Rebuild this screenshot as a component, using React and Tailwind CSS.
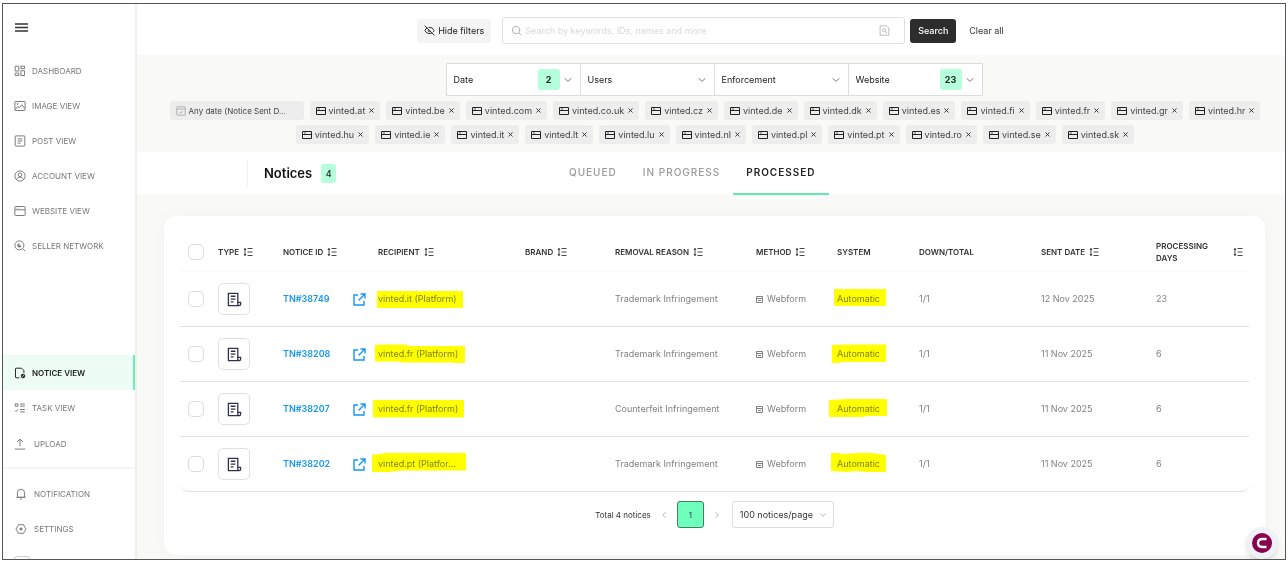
import React, { useState } from 'react';
import { ChevronDown, ChevronLeft, ChevronRight, EyeOff, Search, X } from 'lucide-react';

const MAIN_NAV = [
  { label: 'DASHBOARD', icon: 'dashboard' },
  { label: 'IMAGE VIEW', icon: 'image' },
  { label: 'POST VIEW', icon: 'post' },
  { label: 'ACCOUNT VIEW', icon: 'account' },
  { label: 'WEBSITE VIEW', icon: 'website' },
  { label: 'SELLER NETWORK', icon: 'seller' },
];

const FILTERS = [
  { label: 'Date', count: 2 },
  { label: 'Users' },
  { label: 'Enforcement' },
  { label: 'Website', count: 23 },
];

const SITES = [
  'at', 'be', 'com', 'co.uk', 'cz', 'de', 'dk', 'es', 'fi', 'fr', 'gr', 'hr',
  'hu', 'ie', 'it', 'lt', 'lu', 'nl', 'pl', 'pt', 'ro', 'se', 'sk',
];

const TABS = ['QUEUED', 'IN PROGRESS', 'PROCESSED'];

const COLUMNS = [
  { label: 'TYPE', sort: true },
  { label: 'NOTICE ID', sort: true },
  { label: 'RECIPIENT', sort: true },
  { label: 'BRAND', sort: true },
  { label: 'REMOVAL REASON', sort: true },
  { label: 'METHOD', sort: true },
  { label: 'SYSTEM' },
  { label: 'DOWN/TOTAL' },
  { label: 'SENT DATE', sort: true },
];

// recipientMark and systemMark are the marker strokes over the two cells
const NOTICES = [
  { id: 'TN#38749', recipient: 'vinted.it (Platform)', reason: 'Trademark Infringement', date: '12 Nov 2025', days: 23, recipientMark: 'M7 4H93V21H7Z', systemMark: 'M5 2H57V19H5Z' },
  { id: 'TN#38208', recipient: 'vinted.fr (Platform)', reason: 'Trademark Infringement', date: '11 Nov 2025', days: 6, recipientMark: 'M5 3L14 2.5H34L40 4H95V21H84L82 20.5H32L28 19.5H5Z', systemMark: 'M3 3L18 2.5H57V20H13L10 21H3Z' },
  { id: 'TN#38207', recipient: 'vinted.fr (Platform)', reason: 'Counterfeit Infringement', date: '11 Nov 2025', days: 6, recipientMark: 'M3 3H94V20.5H3Z', systemMark: 'M0 3L18 2H58V19H38L34 20H0Z' },
  { id: 'TN#38202', recipient: 'vinted.pt (Platfor...', reason: 'Trademark Infringement', date: '11 Nov 2025', days: 6, recipientMark: 'M2 3L16 1H96V18.5H30L20 20H2Z', systemMark: 'M2 1L10 1L12 2L28 1L43 1L57 3V20H38L28 19L18 20L2 19Z' },
];

const ICONS = {
  dashboard: <><path d="M2 2h6v8H2zM11.5 2h6v4h-6zM2 13.5h6v4H2zM11.5 9.5h6v8h-6z" /></>,
  image: <><rect x="1.5" y="2.5" width="17" height="15" rx="1" /><path d="M2 16l4-5 3 2 4-5 5 6" /><circle cx="6" cy="6.5" r=".8" /></>,
  post: <><rect x="2" y="1.5" width="16" height="17" rx="1" /><path d="M6 6.5h8M6 10h8M6 13.5h5" /></>,
  account: <><circle cx="10" cy="10" r="8.5" /><circle cx="10" cy="8" r="3" /><path d="M4.5 16c1-3 3-4 5.5-4s4.5 1 5.5 4" /></>,
  website: <><rect x="1.5" y="2.5" width="17" height="15" rx="1" /><path d="M2 8h16M4.5 5.3h1M8 5.3h1" /></>,
  seller: <><circle cx="9" cy="9" r="7.5" /><path d="M14.5 14.5l4 4" /><path d="M9 5.5a3.5 3.5 0 1 0 3.5 3.5H9z" fill="currentColor" stroke="none" /></>,
  notice: <><path d="M9 18H3.5a1 1 0 0 1-1-1V3a1 1 0 0 1 1-1h9l4 4v4" /><circle cx="15" cy="15" r="3" fill="currentColor" /><path d="M13.5 16.5l3-3" stroke="#edfdf6" strokeWidth="1.4" /></>,
  task: <><path d="M2 3h4.5v4H2zM10 3.5h8M10 7h8M1.5 14l2 2 3.5-4M10 12.5h8M10 16.5h8" /></>,
  upload: <><path d="M10 14V2M5 6.5L10 2l5 4.5M1.5 18.5h17" /></>,
  bell: <><path d="M4 15.5V8a6 6 0 0 1 12 0v7.5zM2.5 15.5h15M8.5 18.5h3" /></>,
  settings: <><path d="M6 2.5h2l2 1 2-1h2l2 4 2.5 3.5-2.5 3.5-2 4h-2l-2-1-2 1H6l-2-4L1.5 10 4 6.5z" /><circle cx="10" cy="10" r="1.8" fill="currentColor" /></>,
};

function Icon({ name, className = 'size-3' }) {
  return (
    <svg viewBox="0 0 20 20" fill="none" stroke="currentColor" strokeWidth="1.6" className={className + ' shrink-0'} aria-hidden="true">
      {ICONS[name]}
    </svg>
  );
}

function SiteIcon() {
  return (
    <svg viewBox="0 0 10 10" className="size-[10px] shrink-0 text-[#222]" fill="none" stroke="currentColor" aria-hidden="true">
      <path d="M.5 1.5h9v7h-9zM.5 4.5h9" />
      <path d="M2 3h2" strokeWidth=".7" />
    </svg>
  );
}

function SortIcon() {
  return (
    <svg viewBox="0 0 10 10" className="size-[10px] shrink-0" fill="none" stroke="currentColor" aria-hidden="true">
      <path d="M2 2v6M4.5 1.5h5M4.5 5h5M4.5 8.5h5" strokeWidth=".9" />
      <path d="M2 .8l1.6 2H.4zM2 9.2l1.6-2H.4z" fill="currentColor" stroke="none" />
    </svg>
  );
}

function NavItem({ label, icon, active }) {
  return (
    <a
      href="#"
      className={
        active
          ? 'flex h-[35px] items-center gap-[6px] border-r-2 border-[#62f3b4] bg-[#edfdf6] pl-[11px] text-[8px] font-semibold text-[#222]'
          : 'flex h-[35px] items-center gap-[6px] pl-[11px] text-[8px] text-[#777]'
      }
    >
      <Icon name={icon} />
      {label}
    </a>
  );
}

function Marked({ children, mark, width }) {
  return (
    <span className="relative inline-block">
      {children}
      <svg
        width={width}
        height="24"
        className="pointer-events-none absolute top-1/2 -left-2 max-w-none -translate-y-1/2 mix-blend-multiply"
        aria-hidden="true"
      >
        <path d={mark} fill="#ffff00" />
      </svg>
    </span>
  );
}

function CheckBox({ label }) {
  return (
    <input
      type="checkbox"
      aria-label={label}
      className="block size-4 appearance-none rounded-[5px] border border-[#dcdcdc] bg-white checked:bg-[#6fffbd]"
    />
  );
}

function Sidebar() {
  return (
    <aside className="w-[134px] shrink-0 overflow-hidden border-r-2 border-[#efefef] bg-white">
      <div className="flex h-[49px] items-center pb-[3px] pl-3">
        <button type="button" aria-label="Menu">
          <svg viewBox="0 0 13 9" className="h-[9px] w-[13px] text-[#333]" stroke="currentColor" strokeWidth="1.4" aria-hidden="true">
            <path d="M0 1h13M0 4.5h13M0 8h13" />
          </svg>
        </button>
      </div>
      <nav>
        {MAIN_NAV.map((item) => <NavItem key={item.label} {...item} />)}
        <div className="mt-[92px]">
          <NavItem label="NOTICE VIEW" icon="notice" active />
          <NavItem label="TASK VIEW" icon="task" />
          <a href="#" className="flex h-[38px] items-center gap-2 pl-[11px] text-[8px] text-[#777]">
            <Icon name="upload" />UPLOAD
          </a>
        </div>
        <div className="mt-1 border-t-2 border-[#f5f5f5] pt-[7px]">
          <a href="#" className="flex h-[35px] items-center gap-[7px] pl-3 text-[8px] text-[#777]">
            <Icon name="bell" />NOTIFICATION
          </a>
          <a href="#" className="flex h-[35px] items-center gap-[7px] pl-3 text-[8px] text-[#777]">
            <Icon name="settings" />SETTINGS
          </a>
          <div className="mt-[10px] ml-[11px] h-4 w-4 rounded-[3px] border border-[#ccc]" />
        </div>
      </nav>
    </aside>
  );
}

function SearchBar() {
  return (
    <form className="flex h-[51px] items-center justify-center bg-white pt-[2px] pl-3 text-[9px]" onSubmit={(e) => e.preventDefault()}>
      <button type="button" className="mr-[11px] flex h-6 w-[74px] items-center justify-center gap-[3px] rounded-[3px] bg-[#f4f4f4] text-[#222]">
        <EyeOff className="size-[11px]" />Hide filters
      </button>
      <label className="mr-[5px] flex h-[27px] w-[403px] items-center gap-[3px] rounded-[3px] border border-[#e0e0e0] pr-[14px] pl-2">
        <Search className="size-[11px] text-[#aaa]" />
        <input
          type="search"
          aria-label="Search notices"
          placeholder="Search by keywords, IDs, names and more"
          className="min-w-0 flex-1 outline-none placeholder:text-[#d9d9d9]"
        />
        <svg viewBox="0 0 20 20" className="size-[11px] text-[#bbb]" fill="none" stroke="currentColor" strokeWidth="1.8" aria-hidden="true">
          <path d="M2 1.5h11l5 4v13H2zM11.5 11.5l3 3" />
          <circle cx="9.5" cy="9.5" r="3" />
        </svg>
      </label>
      <button type="submit" className="h-6 w-[46px] rounded-[3px] bg-[#2d2d2d] font-medium text-white">Search</button>
      <button type="button" className="px-[13px] text-[#333]">Clear all</button>
    </form>
  );
}

function Filters() {
  return (
    <section className="pt-2 pr-6 pb-2 pl-8">
      <div className="flex justify-center pr-[3px]">
        {FILTERS.map((f) => (
          <label key={f.label} className="-mr-px flex h-[33px] w-[135px] items-center gap-[2px] border border-[#dcdcdc] bg-white pr-[6px] pl-[7px]">
            <select aria-label={f.label} className="min-w-0 flex-1 appearance-none text-[9px] text-[#222] outline-none">
              <option>{f.label}</option>
            </select>
            {f.count && (
              <span className="flex h-[21px] w-[22px] items-center justify-center rounded-[3px] bg-[#b5ffdc] text-[9px] font-bold text-[#222]">
                {f.count}
              </span>
            )}
            <ChevronDown className="pointer-events-none size-3 text-[#777]" />
          </label>
        ))}
      </div>
      <ul className="mt-[5px] flex flex-wrap justify-center gap-x-[6px] gap-y-[5px] text-[9px] text-[#444]">
        <li className="flex h-[19px] w-[134px] items-center gap-[3px] rounded-[3px] bg-[#eeeded] px-[6px] text-[8px] whitespace-nowrap">
          <svg viewBox="0 0 20 20" className="size-[10px] shrink-0 text-[#aaa]" fill="none" stroke="currentColor" strokeWidth="1.8" aria-hidden="true">
            <rect x="1.5" y="1.5" width="17" height="17" rx="2" />
            <path d="M1.5 6h17M7 12l2.5 2.5L13 10" />
          </svg>
          Any date (Notice Sent D...
        </li>
        {SITES.map((site) => (
          <li key={site} className="flex h-[19px] items-center gap-[3px] rounded-[3px] bg-[#eeeded] pr-[5px] pl-[6px]">
            <SiteIcon />
            vinted.{site}
            <button type="button" aria-label={'Remove vinted.' + site}>
              <X className="size-[7px] text-[#222]" strokeWidth={3} />
            </button>
          </li>
        ))}
      </ul>
    </section>
  );
}

function NoticeTabs() {
  const [tab, setTab] = useState('PROCESSED');
  return (
    <div className="flex h-[43px] bg-white">
      <div className="flex w-[419px] shrink-0 items-center pl-[110px]">
        <div className="flex h-[27px] items-center gap-[9px] border-l border-[#f0f0f0] pl-4">
          <h1 className="text-[13px] font-semibold text-[#111]">Notices</h1>
          <span className="flex h-[19px] w-[15px] items-center justify-center rounded-[3px] bg-[#b5ffdc] text-[9px] font-medium text-[#222]">4</span>
        </div>
      </div>
      <div role="tablist" className="flex">
        {TABS.map((t) => (
          <button
            key={t}
            type="button"
            role="tab"
            aria-selected={t === tab}
            onClick={() => setTab(t)}
            className={
              t === tab
                ? 'border-b-2 border-[#62e9ae] px-[13px] text-[10px] font-semibold tracking-widest text-[#222]'
                : 'border-b-2 border-transparent px-[13px] text-[10px] font-medium tracking-widest text-[#999]'
            }
          >
            {t}
          </button>
        ))}
      </div>
    </div>
  );
}

function NoticeTable() {
  return (
    <table className="w-full table-fixed border-separate border-spacing-0 text-left text-[9px] text-[#808080]">
      <colgroup>
        <col className="w-[38px]" />
        <col className="w-[65px]" />
        <col className="w-[95px]" />
        <col />
        <col className="w-[90px]" />
        <col className="w-[141px]" />
        <col className="w-[81px]" />
        <col className="w-[82px]" />
        <col className="w-[122px]" />
        <col className="w-[115px]" />
        <col className="w-[93px]" />
      </colgroup>
      <thead>
        <tr className="text-[8px] text-[#333]">
          <th className="h-[39px] border-b border-[#fafafa] pl-2"><CheckBox label="Select all notices" /></th>
          {COLUMNS.map((c) => (
            <th key={c.label} className="border-b border-[#fafafa] font-semibold">
              {c.sort ? (
                <button type="button" className="flex items-center gap-1 whitespace-nowrap">{c.label}<SortIcon /></button>
              ) : c.label}
            </th>
          ))}
          <th className="border-b border-[#fafafa] pr-[6px] font-semibold">
            <button type="button" className="flex w-full items-center justify-between text-left leading-3">
              <span>PROCESSING<br />DAYS</span><SortIcon />
            </button>
          </th>
        </tr>
      </thead>
      <tbody className="[&_td]:h-[55px] [&_td]:border-b [&_td]:border-[#e2e2e2] [&>tr:last-child>td:first-child]:rounded-bl-lg [&>tr:last-child>td:last-child]:rounded-br-lg">
        {NOTICES.map((n) => (
          <tr key={n.id}>
            <td className="pl-2"><CheckBox label={'Select ' + n.id} /></td>
            <td>
              <div className="flex size-8 items-center justify-center rounded-[5px] border border-[#e0e0e0]">
                <svg viewBox="0 0 16 16" className="size-[15px] text-[#33304f]" fill="none" stroke="currentColor" strokeWidth="1.4" aria-hidden="true">
                  <path d="M11.5 10.5V1.5h-10v13H13a1.5 1.5 0 0 0 1.5-1.5v-2h-3v2a1.5 1.5 0 0 0 1.5 1.5M4 4.5h5M4 7.5h5M4 10.5h3" />
                </svg>
              </div>
            </td>
            <td>
              <div className="flex items-center justify-between pr-3 text-[#1597f5]">
                <a href="#" className="font-semibold">{n.id}</a>
                <a href="#" aria-label={'Open ' + n.id}>
                  <svg viewBox="0 0 13 13" className="size-[13px]" fill="none" stroke="currentColor" strokeWidth="1.4" aria-hidden="true">
                    <path d="M5 2H1v10h10V8M7.5 1H12v4.5M12 1L5.5 7.5" />
                  </svg>
                </a>
              </div>
            </td>
            <td><Marked mark={n.recipientMark} width="98">{n.recipient}</Marked></td>
            <td />
            <td>{n.reason}</td>
            <td>
              <div className="flex items-center gap-1">
                <svg viewBox="0 0 7 7" className="size-[7px]" fill="none" stroke="currentColor" aria-hidden="true">
                  <path d="M.5.5h6v6h-6zM1 2.5h5M2 4.5h3" />
                </svg>
                Webform
              </div>
            </td>
            <td><Marked mark={n.systemMark} width="62">Automatic</Marked></td>
            <td>1/1</td>
            <td>{n.date}</td>
            <td>{n.days}</td>
          </tr>
        ))}
      </tbody>
    </table>
  );
}

function Pagination() {
  return (
    <div className="mt-[9px] flex items-center justify-center text-[#333]">
      <span className="text-[8px]">Total 4 notices</span>
      <button type="button" aria-label="Previous page" className="mx-2"><ChevronLeft className="size-[10px] text-[#aaa]" strokeWidth={2} /></button>
      <button type="button" className="size-[27px] rounded-[3px] border border-[#3f7f62] bg-[#6fffbd] text-[8px]">1</button>
      <button type="button" aria-label="Next page" className="ml-2"><ChevronRight className="size-[10px] text-[#aaa]" strokeWidth={2} /></button>
      <label className="ml-[10px] flex h-[27px] w-[102px] items-center rounded-[3px] border border-[#dcdcdc] pr-[5px] pl-[7px]">
        <select aria-label="Page size" className="min-w-0 flex-1 appearance-none text-[9px] outline-none">
          <option>100 notices/page</option>
        </select>
        <ChevronDown className="pointer-events-none size-[10px] shrink-0 text-[#aaa]" />
      </label>
    </div>
  );
}

export default function App() {
  return (
    <div className="h-screen bg-white px-[2px] pt-[3px] pb-[2px] font-[Inter,sans-serif]">
      <div className="relative flex h-full overflow-hidden border border-[#555]">
        <Sidebar />
        <main className="min-w-0 flex-1 bg-[#f9f9f8]">
          <SearchBar />
          <Filters />
          <NoticeTabs />
          <div className="mt-[21px] mr-5 ml-[27px] rounded-xl bg-white px-4 pt-[17px] pb-[27px] shadow-[0_0_16px_rgba(0,0,0,0.03)]">
            <NoticeTable />
            <Pagination />
          </div>
        </main>
        <button
          type="button"
          aria-label="Open chat"
          className="absolute right-[7px] bottom-0 flex size-8 items-center justify-center rounded-full bg-[#f0f1f6] shadow-md"
        >
          <svg viewBox="0 0 20 20" className="size-5" aria-hidden="true">
            <circle cx="10" cy="10" r="10" fill="#870052" />
            <path d="M14.5 6H10.5Q6 6 6 10T10.5 14H14.5" fill="none" stroke="#fff" strokeWidth="2.4" />
          </svg>
        </button>
      </div>
    </div>
  );
}
